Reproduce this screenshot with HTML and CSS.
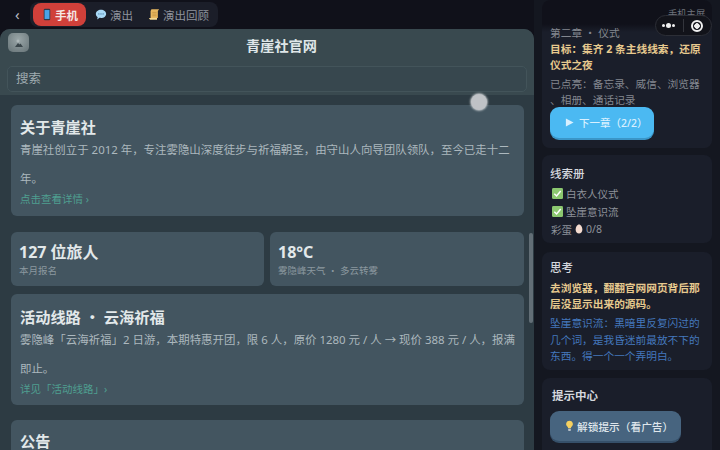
FILE: index.html
```html
<!DOCTYPE html>
<html lang="zh-CN">
<head>
    <meta charset="UTF-8">
    <meta name="viewport" content="width=device-width, initial-scale=1.0">
    <title>青崖社官网</title>
    <link rel="stylesheet" href="styles.css">
</head>
<body>
    <div class="app">
        <div class="main">
            <!-- top tabs -->
            <div class="topbar">
                <span class="back">‹</span>
                <div class="tabs">
                    <div class="tab active">
                        <svg class="tab-icon" viewBox="0 0 12 16"><rect x="2" y="1" width="8" height="14" rx="1.5" fill="#2f3a4a"/><rect x="3" y="2.5" width="6" height="11" fill="#4aa3e8"/></svg>
                        手机
                    </div>
                    <div class="tab">
                        <svg class="tab-icon" viewBox="0 0 14 14"><path d="M7 1.5c3.3 0 6 2.1 6 4.8s-2.7 4.8-6 4.8c-.6 0-1.2-.1-1.7-.2L2.5 12.8l.6-2.7C1.8 9.2 1 7.9 1 6.3 1 3.6 3.7 1.5 7 1.5z" fill="#a8d8f5"/><circle cx="4.5" cy="6.3" r=".8" fill="#4a7fa8"/><circle cx="7" cy="6.3" r=".8" fill="#4a7fa8"/><circle cx="9.5" cy="6.3" r=".8" fill="#4a7fa8"/></svg>
                        演出
                    </div>
                    <div class="tab">
                        <svg class="tab-icon" viewBox="0 0 14 14"><path d="M4 1h9l-1.5 2v8H3V3z" fill="#e8b860"/><path d="M1 11h9.500v2H2.500z" fill="#f5d890"/><path d="M5 4.500h5M5 6.500h5M5 8.500h5" stroke="#b88838" stroke-width=".7"/></svg>
                        演出回顾
                    </div>
                </div>
            </div>

            <div class="phone">
                <div class="site-head">
                    <div class="site-logo">
                        <svg viewBox="0 0 21 19"><path d="M7 14l3-4 1.500 1.500 1-1L15 14z" fill="#3a464b"/><circle cx="10" cy="8" r="1.500" fill="#aeb8ba"/></svg>
                    </div>
                    <div class="site-title">青崖社官网</div>
                </div>
                <div class="search-wrap">
                    <div class="search">搜索</div>
                </div>

                <div class="content">
                    <div class="card about">
                        <h3>关于青崖社</h3>
                        <p>青崖社创立于 2012 年，专注雾隐山深度徒步与祈福朝圣，由守山人向导团队领队，至今已走十二年。</p>
                        <a class="more">点击查看详情 ›</a>
                    </div>

                    <div class="stats">
                        <div class="card stat stat-left">
                            <div class="stat-num">127 位旅人</div>
                            <div class="stat-label">本月报名</div>
                        </div>
                        <div class="card stat">
                            <div class="stat-num">18°C</div>
                            <div class="stat-label">雾隐峰天气 ・ 多云转雾</div>
                        </div>
                    </div>

                    <div class="card route">
                        <h3>活动线路 ・ 云海祈福</h3>
                        <p>雾隐峰「云海祈福」2 日游，本期特惠开团，限 6 人，原价 1280 元 / 人 → 现价 388 元 / 人，报满即止。</p>
                        <a class="more">详见「活动线路」›</a>
                    </div>

                    <div class="card notice">
                        <h3>公告</h3>
                    </div>
                </div>
                <div class="scroll-thumb"></div>
            </div>
        </div>

        <div class="side">
            <div class="side-card chapter">
                <div class="muted">第二章 ・ 仪式</div>
                <div class="goal">目标：集齐 2 条主线线索，还原仪式之夜</div>
                <div class="muted lit">已点亮：备忘录、威信、浏览器<br>、相册、通话记录</div>
                <button class="btn-next">
                    <svg class="play" viewBox="0 0 10 10"><path d="M1 .5l8.500 4.500L1 9.500z" fill="#d8f0ff"/></svg>
                    下一章（2/2）
                </button>
            </div>

            <div class="side-card clues">
                <h4>线索册</h4>
                <div class="clue">
                    <svg class="check" viewBox="0 0 12 12"><rect width="12" height="12" rx="1.500" fill="#8cc870"/><path d="M2.500 6.200l2.500 2.500 4.500-5.500" fill="none" stroke="#fff" stroke-width="1.600"/></svg>
                    白衣人仪式
                </div>
                <div class="clue">
                    <svg class="check" viewBox="0 0 12 12"><rect width="12" height="12" rx="1.500" fill="#8cc870"/><path d="M2.500 6.200l2.500 2.500 4.500-5.500" fill="none" stroke="#fff" stroke-width="1.600"/></svg>
                    坠崖意识流
                </div>
                <div class="clue eggs">
                    彩蛋
                    <svg class="egg" viewBox="0 0 10 12"><path d="M5 .5c2.300 0 4.200 3.300 4.200 6.300 0 2.800-1.900 4.700-4.200 4.700S.8 9.600.8 6.800C.8 3.800 2.700.5 5 .5z" fill="#f5dcd0"/></svg>
                    0/8
                </div>
            </div>

            <div class="side-card thought">
                <h4>思考</h4>
                <div class="goal">去浏览器，翻翻官网网页背后那层没显示出来的源码。</div>
                <div class="stream">坠崖意识流：黑暗里反复闪过的几个词，是我昏迷前最放不下的东西。得一个一个弄明白。</div>
            </div>

            <div class="side-card hints">
                <h4>提示中心</h4>
                <button class="btn-hint">
                    <svg class="bulb" viewBox="0 0 10 14"><path d="M5 .8a4 4 0 0 0-2.400 7.200c.5.400.7.900.7 1.500h3.400c0-.6.2-1.100.7-1.500A4 4 0 0 0 5 .8z" fill="#f5d060"/><rect x="3.400" y="10.300" width="3.200" height="2.400" rx=".8" fill="#b8c0c8"/></svg>
                    解锁提示（看广告）
                </button>
            </div>
        </div>

        <!-- overlays -->
        <div class="phone-home">手机主屏</div>
        <div class="capsule">
            <span class="dots"><i></i><i class="big"></i><i></i></span>
            <span class="divider"></span>
            <span class="target"></span>
        </div>
        <div class="float-dot"></div>
    </div>
</body>
</html>
```

FILE: styles.css
```css
* {
    box-sizing: border-box;
}

body {
    margin: 0;
    background-color: #10111a;
    font-family: "Noto Sans", "Noto Sans CJK SC", sans-serif;
    overflow: hidden;
}

.app {
    position: relative;
    display: flex;
    width: 720px;
    height: 450px;
    overflow: hidden;
}

/* --- Left column --- */
.main {
    display: flex;
    flex-direction: column;
    width: 534px;
    flex-shrink: 0;
}

.topbar {
    display: flex;
    align-items: center;
    height: 29px;
    flex-shrink: 0;
    padding-left: 15px;
}

.back {
    width: 15px;
    color: #b8bcc4;
    font-size: 15px;
    line-height: 29px;
}

.tabs {
    display: flex;
    align-items: center;
    gap: 2px;
    height: 25px;
    padding: 0 3px;
    border-radius: 8px;
    background-color: #1b1e29;
}

.tab {
    display: flex;
    align-items: center;
    gap: 3px;
    height: 23px;
    padding: 0 6px 0 7px;
    border-radius: 8px;
    color: #8e939c;
    font-size: 11.5px;
    white-space: nowrap;
}

.tab.active {
    width: 53px;
    gap: 2px;
    padding: 0 0 0 8px;
    background-color: #d0403a;
    color: #f4e6e4;
    font-weight: 700;
}

.tab-icon {
    width: 12px;
    height: 13px;
}

.phone {
    position: relative;
    flex: 1;
    display: flex;
    flex-direction: column;
    overflow: hidden;
    border-radius: 10px 10px 0 0;
    background-color: #2d3b43;
}

.site-head {
    display: flex;
    align-items: center;
    height: 32px;
    flex-shrink: 0;
    padding-left: 8px;
    background-color: #39494f;
}

.site-logo {
    width: 21px;
    height: 19px;
    flex-shrink: 0;
    margin-top: -5px;
    border-radius: 5px;
    background: radial-gradient(circle at 50% 35%, #9aa6a8, #667377);
}

.site-logo svg {
    display: block;
}

.site-title {
    flex: 1;
    color: #dfe6e8;
    font-size: 14.2px;
    font-weight: 700;
    text-align: center;
}

.search-wrap {
    height: 34px;
    flex-shrink: 0;
    padding: 5px 7px 0;
    background-color: #39494f;
}

.search {
    height: 26px;
    padding-left: 8px;
    border: 1px solid #43545a;
    border-radius: 5px;
    background-color: #37474e;
    color: #9fabb0;
    font-size: 12.5px;
    line-height: 24px;
}

.content {
    display: flex;
    flex-direction: column;
    padding: 10px 10px 0 11px;
}

.card {
    border-radius: 6px;
    background-color: #435560;
}

.card h3 {
    margin: 0;
    color: #e2e8ea;
    font-size: 15.2px;
    font-weight: 700;
    line-height: 20px;
}

.card p {
    margin: -2px 0 0;
    color: #acb8be;
    font-size: 11.45px;
    line-height: 29px;
}

.more {
    display: block;
    margin-top: -1px;
    color: #4f9f90;
    font-size: 10.5px;
    line-height: 14px;
}

.about {
    height: 111px;
    padding: 12px 9px 0;
}

.stats {
    display: flex;
    gap: 6px;
    margin-top: 16px;
}

.stat {
    flex: 1;
    height: 54px;
    padding: 8px 8px 0;
}

.stat-left {
    flex: 0 0 253px;
}

.stat-num {
    color: #e2e8ea;
    font-size: 16px;
    font-weight: 700;
    line-height: 24px;
}

.stat-label {
    color: #8b989f;
    font-size: 9.5px;
    line-height: 14px;
}

.route {
    height: 111px;
    margin-top: 8px;
    padding: 13px 9px 0;
}

.notice {
    height: 60px;
    margin-top: 15px;
    padding: 12px 9px 0;
}

.notice h3 {
    line-height: 18px;
}

.scroll-thumb {
    position: absolute;
    left: 529px;
    top: 204px;
    width: 4px;
    height: 90px;
    border-radius: 2px;
    background-color: #626e76;
}

/* --- Right column --- */
.side {
    display: flex;
    flex-direction: column;
    gap: 8px;
    width: 186px;
    padding: 0 8px;
    background-color: #141720;
}

.side-card {
    flex-shrink: 0;
    padding: 9px 8px 0;
    border-radius: 8px;
    background-color: #1a1e2a;
}

.side-card h4 {
    margin: 0;
    color: #d4d7dd;
    font-size: 11.5px;
    font-weight: 500;
    line-height: 20px;
}

.muted {
    color: #83878f;
    font-size: 10.7px;
    line-height: 16px;
}

.goal {
    color: #e6c98e;
    font-size: 10.7px;
    font-weight: 700;
    line-height: 16px;
}

.chapter {
    height: 148px;
    padding-top: 25px;
    background: linear-gradient(#10111a 0, #10111a 24px, #1a1e2a 32px);
}

.lit {
    margin-top: 4px;
    line-height: 15.5px;
}

.btn-next {
    display: flex;
    align-items: center;
    gap: 5px;
    width: 104px;
    height: 31px;
    margin-top: -1px;
    padding: 0 0 0 15px;
    border: 0;
    border-radius: 9px;
    background-color: #4bb9f2;
    box-shadow: 0 2px 0 #3a96c8;
    color: #d8f0ff;
    font-family: inherit;
    font-size: 10.5px;
    font-weight: 500;
}

.play {
    width: 9px;
    height: 9px;
}

.clues {
    height: 88px;
    margin: -1px 0 1px;
}

.clue {
    display: flex;
    align-items: center;
    gap: 3px;
    height: 18px;
    padding-left: 2px;
    color: #8e929a;
    font-size: 10.5px;
}

.eggs {
    padding-left: 1px;
}

.check {
    width: 11px;
    height: 11px;
}

.egg {
    width: 8px;
    height: 10px;
}

.thought {
    height: 118px;
    padding-top: 6px;
}

.thought .goal {
    margin-top: 2px;
}

.stream {
    margin-top: 3px;
    color: #4478bd;
    font-size: 10.7px;
    line-height: 16.5px;
}

.hints {
    height: 80px;
    padding: 8px 8px 0 10px;
}

.hints h4 {
    font-weight: 700;
}

.btn-hint {
    display: flex;
    align-items: center;
    gap: 3px;
    width: 131px;
    height: 30px;
    margin: 5px 0 0 -2px;
    padding: 0 0 0 15px;
    border: 0;
    border-radius: 9px;
    background-color: #47647f;
    box-shadow: 0 2px 0 #36506a;
    color: #dfe6ec;
    font-family: inherit;
    font-size: 10.7px;
    font-weight: 500;
}

.bulb {
    width: 9px;
    height: 12px;
}

/* --- Overlays --- */
.phone-home {
    position: absolute;
    top: 7px;
    left: 668px;
    color: #6f737b;
    font-size: 9.3px;
    line-height: 14px;
}

.capsule {
    position: absolute;
    top: 15px;
    left: 655px;
    display: flex;
    align-items: center;
    width: 57px;
    height: 21px;
    padding-left: 6px;
    border: 1px solid #2c2e36;
    border-radius: 11px;
    background-color: #12131a;
}

.dots {
    display: flex;
    align-items: center;
    gap: 1px;
    width: 17px;
}

.dots i {
    width: 3px;
    height: 3px;
    border-radius: 50%;
    background-color: #f0f0f0;
}

.dots i.big {
    width: 5px;
    height: 5px;
}

.divider {
    width: 1px;
    height: 13px;
    margin: 0 7px 0 4px;
    background-color: #33353c;
}

.target {
    width: 12px;
    height: 12px;
    border: 2px solid #f0f0f0;
    border-radius: 50%;
    background: radial-gradient(circle, #f0f0f0 0 2.5px, transparent 3px);
}

.float-dot {
    position: absolute;
    top: 94px;
    left: 471px;
    width: 16px;
    height: 16px;
    border-radius: 50%;
    background-color: #bfc2c6;
    box-shadow: 0 0 2px 1px rgba(255, 255, 255, 0.6);
}
```
